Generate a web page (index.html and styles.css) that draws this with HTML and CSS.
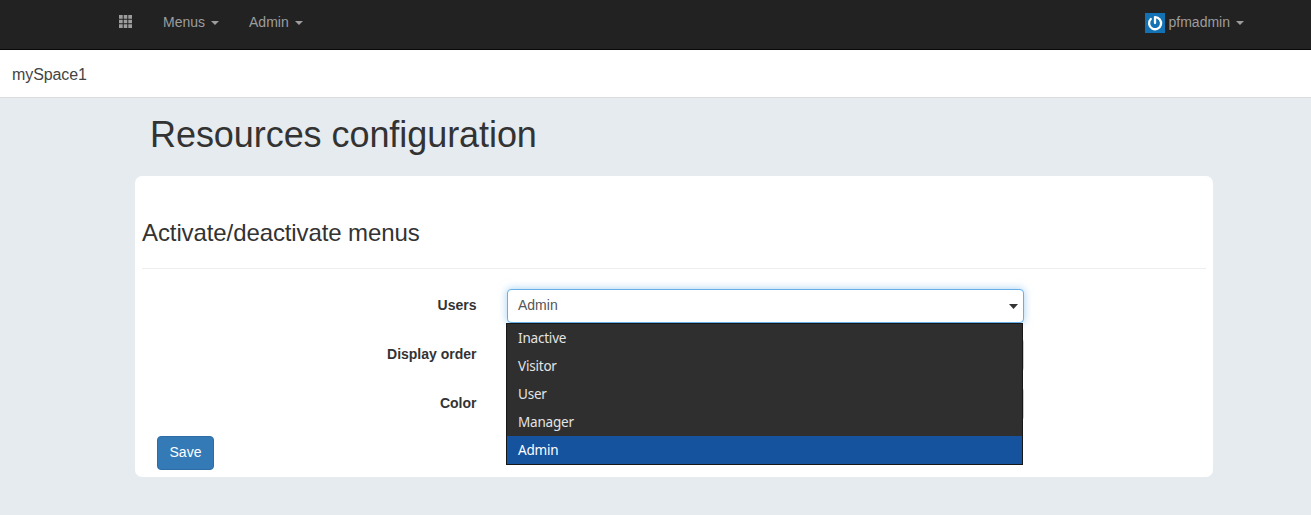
FILE: index.html
```html
<!DOCTYPE html>
<html lang="en">
<head>
<meta charset="utf-8">
<title>Resources configuration</title>
<link rel="stylesheet" href="styles.css">
</head>
<body>
<nav class="navbar">
  <svg class="grid-icon" width="13" height="13" viewBox="0 0 13 13" fill="currentColor">
    <path d="M0 0h3.7v3.7H0zM4.7 0h3.6v3.7H4.7zM9.3 0H13v3.7H9.3zM0 4.7h3.7v3.6H0zM4.7 4.7h3.6v3.6H4.7zM9.3 4.7H13v3.6H9.3zM0 9.3h3.7V13H0zM4.7 9.3h3.6V13H4.7zM9.3 9.3H13V13H9.3z"/>
  </svg>
  <a class="nav-item menus">Menus<span class="caret"></span></a>
  <a class="nav-item">Admin<span class="caret"></span></a>
  <a class="nav-item account">
    <svg class="avatar" width="20" height="20" viewBox="0 0 20 20">
      <rect width="20" height="20" fill="#1272b4"/>
      <path d="M10 10V4.2A6 6 0 1 1 5.8 6" fill="none" stroke="#fff" stroke-width="2.3" stroke-linecap="round" stroke-linejoin="round"/>
    </svg>
    <span class="account-name">pfmadmin</span><span class="caret"></span>
  </a>
</nav>
<div class="space-bar">mySpace1</div>
<main class="container">
  <h1 class="page-title">Resources configuration</h1>
  <section class="card">
    <h2 class="section-title">Activate/deactivate menus</h2>
    <form class="form">
      <div class="row">
        <label class="label">Users</label>
        <div class="field">
          <div class="control focused">Admin<span class="select-arrow"></span></div>
          <ul class="options">
            <li class="option">Inactive</li>
            <li class="option">Visitor</li>
            <li class="option">User</li>
            <li class="option">Manager</li>
            <li class="option selected">Admin</li>
          </ul>
        </div>
      </div>
      <div class="row">
        <label class="label">Display order</label>
        <div class="field"><div class="control"></div></div>
      </div>
      <div class="row">
        <label class="label">Color</label>
        <div class="field"><div class="control"></div></div>
      </div>
      <button class="save" type="button">Save</button>
    </form>
  </section>
</main>
</body>
</html>
```
FILE: styles.css
```css
* { box-sizing: border-box; }
body {
  margin: 0;
  min-height: 515px;
  background: #e6ebef;
  color: #333;
  font: 14px/20px "Liberation Sans", Arial, sans-serif;
}
.navbar {
  display: flex;
  align-items: flex-start;
  height: 50px;
  padding: 12px 67px 0 119px;
  background: #222;
  border-bottom: 1px solid #080808;
  color: #9d9d9d;
}
.grid-icon { margin-top: 3px; }
.nav-item { display: flex; align-items: center; margin-left: 30px; }
.menus { margin-left: 31px; }
.caret {
  margin: 2px 0 0 6px;
  border-top: 4px solid;
  border-right: 4px solid transparent;
  border-left: 4px solid transparent;
}
.account { margin-left: auto; }
.avatar { margin: 1px 4px -1px 0; }
.space-bar {
  height: 48px;
  padding: 15px 12px 0;
  background: #fff;
  border-bottom: 1px solid #d9dde0;
  color: #444;
  font-size: 16px;
  letter-spacing: -0.1px;
}
.container { width: 1078px; margin-left: 135px; }
.page-title {
  margin: 0;
  padding: 17px 15px 0;
  height: 78px;
  font-size: 36px;
  font-weight: 400;
  line-height: 40px;
  letter-spacing: -0.06px;
}
.card {
  height: 301px;
  padding: 43px 7px 0;
  background: #fff;
  border-radius: 7px;
}
.section-title {
  margin: 0 0 20px;
  height: 50px;
  border-bottom: 1px solid #eee;
  font-size: 24px;
  font-weight: 400;
  line-height: 28px;
  letter-spacing: -0.1px;
}
.row { display: flex; height: 34px; margin-bottom: 15px; }
.label { width: 334.5px; padding-top: 6px; font-weight: 700; text-align: right; }
.field { position: relative; width: 517px; margin-left: 30.5px; }
.control {
  position: relative;
  height: 34px;
  padding: 5px 10px;
  background: #fff;
  border: 1px solid #ccc;
  border-radius: 4px;
  color: #555;
}
.focused { border-color: #66afe9; box-shadow: 0 0 8px rgba(102, 175, 233, .6); }
.select-arrow {
  position: absolute;
  top: 14px;
  right: 5px;
  border-top: 5px solid #333;
  border-right: 4.5px solid transparent;
  border-left: 4.5px solid transparent;
  width: 9px;
  height: 5px;
  border: 0;
  background: #333;
  clip-path: polygon(0 0, 100% 0, 50% 100%);
}
.options {
  position: absolute;
  z-index: 1;
  top: 34px;
  left: -1px;
  width: 517px;
  margin: 0;
  padding: 0;
  border: 1px solid #171717;
  background: #2f2f2f;
  color: #e4e4e4;
  font-family: "Noto Sans", sans-serif;
  font-size: 13.5px;
  line-height: 28px;
  letter-spacing: -0.2px;
  list-style: none;
}
.option { height: 28px; padding-left: 11px; }
.selected { background: #15539e; color: #fff; }
.save {
  display: block;
  width: 57px;
  height: 34px;
  margin-left: 15px;
  padding: 0 0 2px;
  border: 1px solid #2e6da4;
  border-radius: 4px;
  background: #337ab7;
  color: #fff;
  font: inherit;
}
```
